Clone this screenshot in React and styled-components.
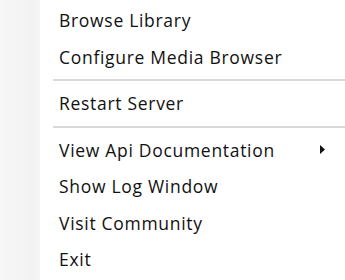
import React from "react";
import styled, { createGlobalStyle } from "styled-components";

const GlobalStyle = createGlobalStyle`
  html, body {
    margin: 0;
    padding: 0;
    background: #ffffff;
  }
`;

const Menu = styled.div`
  display: flex;
  width: 345px;
  height: 280px;
  background: #ffffff;
  font-family: "Open Sans", "Noto Sans", sans-serif;
  color: #111111;
  overflow: hidden;
`;

const Gutter = styled.div`
  width: 40px;
  flex: none;
  background: linear-gradient(to right, #f7f7f7, #f2f2f2 85%, #f6f6f6);
`;

const List = styled.div`
  flex: 1;
  display: flex;
  flex-direction: column;
  padding-top: 2px;
`;

const Item = styled.div`
  display: flex;
  align-items: center;
  justify-content: space-between;
  height: 36.5px;
  padding: 0 20px 0 19px;
  font-size: 17.5px;
  letter-spacing: 0.7px;
  white-space: nowrap;
`;

const Separator = styled.div`
  height: 10px;
  display: flex;
  align-items: center;
  padding-left: 13px;

  &::after {
    content: "";
    flex: 1;
    height: 2px;
    background: #d9d9d9;
  }
`;

const Arrow = styled.svg`
  width: 5px;
  height: 9px;
  flex: none;
`;

const items = [
  { label: "Browse Library" },
  { label: "Configure Media Browser" },
  { sep: true },
  { label: "Restart Server" },
  { sep: true },
  { label: "View Api Documentation", sub: true },
  { label: "Show Log Window" },
  { label: "Visit Community" },
  { label: "Exit" },
];

export default function App() {
  return (
    <>
      <GlobalStyle />
      <Menu>
        <Gutter />
        <List>
          {items.map((it, i) =>
            it.sep ? (
              <Separator key={i} />
            ) : (
              <Item key={i}>
                <span>{it.label}</span>
                {it.sub && (
                  <Arrow viewBox="0 0 5 9">
                    <path d="M0 0 L5 4.5 L0 9 Z" fill="#111" />
                  </Arrow>
                )}
              </Item>
            )
          )}
        </List>
      </Menu>
    </>
  );
}
